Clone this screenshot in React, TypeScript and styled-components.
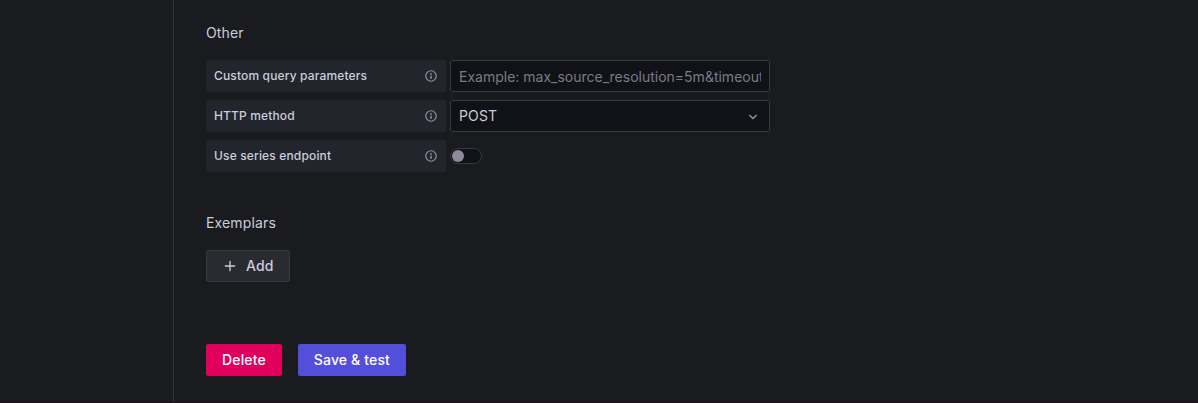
import React from 'react';
import styled, { createGlobalStyle } from 'styled-components';

const GlobalStyle = createGlobalStyle`
  *, *::before, *::after { box-sizing: border-box; }
  html, body { margin: 0; background: #1a1b1f; overflow: hidden; }
  body, input, button {
    font-family: Inter, "Liberation Sans", sans-serif;
    font-size: 14px;
    line-height: 22px;
    letter-spacing: 0.15px;
    color: #ccccdc;
  }
`;

const Page = styled.div`
  display: flex;
  height: 403px;
  background: #1a1b1f;
  border-bottom: 1px solid #1b131b;
`;

const Sidebar = styled.aside`
  flex: 0 0 174px;
  border-right: 1px solid #303136;
`;

const Content = styled.main`
  flex: 1;
  padding: 22px 32px 0;
`;

const Heading = styled.h6`
  margin: 0;
  font-size: 14px;
  font-weight: 400;
  line-height: 22px;
`;

const Fields = styled.div`
  display: flex;
  flex-direction: column;
  gap: 8px;
  margin: 16px 0 40px;
`;

const Field = styled.div`
  display: flex;
  gap: 4px;
  height: 32px;
`;

const Label = styled.label`
  display: flex;
  align-items: center;
  justify-content: space-between;
  width: 240px;
  padding: 0 8px;
  border-radius: 2px;
  background: #22252b;
  font-size: 12px;
  font-weight: 500;
  letter-spacing: 0.15px;
`;

const Icon = styled.svg<{ $color: string }>`
  display: block;
  flex: none;
  fill: ${(p) => p.$color};
`;

const TextInput = styled.input`
  width: 320px;
  height: 32px;
  padding: 0 8px;
  border: 1px solid #38383f;
  border-radius: 2px;
  outline: none;
  background: #111217;
  letter-spacing: normal;
  &::placeholder { color: #7b7b87; opacity: 1; }
`;

const Select = styled.div`
  display: flex;
  align-items: center;
  justify-content: space-between;
  width: 320px;
  padding: 0 7px 0 8px;
  border: 1px solid #38383f;
  border-radius: 2px;
  background: #111217;
  & > svg { margin-top: 2px; }
`;

const Switch = styled.div`
  align-self: center;
  display: flex;
  align-items: center;
  width: 32px;
  height: 16px;
  padding-left: 1px;
  border: 1px solid #38383f;
  border-radius: 8px;
  background: #111217;
`;

const Knob = styled.span`
  width: 12px;
  height: 12px;
  border-radius: 50%;
  background: #8e8a9b;
`;

const Button = styled.button<{ $bg: string; $border?: string }>`
  display: inline-flex;
  align-items: center;
  gap: 8px;
  height: 32px;
  padding: 0 15px;
  border: 1px solid ${(p) => p.$border ?? 'transparent'};
  border-radius: 2px;
  background: ${(p) => p.$bg};
  color: ${(p) => (p.$border ? '#ccccdc' : '#ffffff')};
  font-weight: 500;
`;

const ExemplarActions = styled.div`
  margin-top: 16px;
`;

const Footer = styled.div`
  display: flex;
  gap: 16px;
  margin-top: 62px;
`;

const paths = {
  info: 'M12,2A10,10,0,1,0,22,12,10,10,0,0,0,12,2Zm0,18a8,8,0,1,1,8-8A8,8,0,0,1,12,20Zm0-9a1.3,1.3,0,0,0-1.3,1.3v3.4a1.3,1.3,0,0,0,2.6,0V12.3A1.3,1.3,0,0,0,12,11Zm0-4.2a1.5,1.5,0,1,0,1.5,1.5A1.5,1.5,0,0,0,12,6.8Z',
  down: 'M17,9.17a1,1,0,0,0-1.41,0L12,12.71,8.46,9.17a1,1,0,0,0-1.41,0,1,1,0,0,0,0,1.42l4.24,4.24a1,1,0,0,0,1.42,0L17,10.59A1,1,0,0,0,17,9.17Z',
  plus: 'M19,11H13V5a1,1,0,0,0-2,0v6H5a1,1,0,0,0,0,2h6v6a1,1,0,0,0,2,0V13h6a1,1,0,0,0,0-2Z',
};

function Glyph({ name, size = 16, color = '#92929f' }: { name: keyof typeof paths; size?: number; color?: string }) {
  return (
    <Icon $color={color} width={size} height={size} viewBox="0 0 24 24" aria-hidden="true">
      <path d={paths[name]} />
    </Icon>
  );
}

function FieldRow({ label, children }: { label: string; children: React.ReactNode }) {
  return (
    <Field>
      <Label>
        {label}
        <Glyph name="info" size={14} />
      </Label>
      {children}
    </Field>
  );
}

export default function App() {
  return (
    <>
      <GlobalStyle />
      <Page>
        <Sidebar />
        <Content>
          <Heading>Other</Heading>
          <Fields>
            <FieldRow label="Custom query parameters">
              <TextInput placeholder="Example: max_source_resolution=5m&timeout=10" />
            </FieldRow>
            <FieldRow label="HTTP method">
              <Select>
                POST
                <Glyph name="down" size={18} />
              </Select>
            </FieldRow>
            <FieldRow label="Use series endpoint">
              <Switch role="switch" aria-checked={false}>
                <Knob />
              </Switch>
            </FieldRow>
          </Fields>
          <Heading>Exemplars</Heading>
          <ExemplarActions>
            <Button $bg="#2a2b31" $border="#38393f">
              <Glyph name="plus" color="#ccccdc" />
              Add
            </Button>
          </ExemplarActions>
          <Footer>
            <Button $bg="#e0005b">Delete</Button>
            <Button $bg="#544fdb">Save &amp; test</Button>
          </Footer>
        </Content>
      </Page>
    </>
  );
}
